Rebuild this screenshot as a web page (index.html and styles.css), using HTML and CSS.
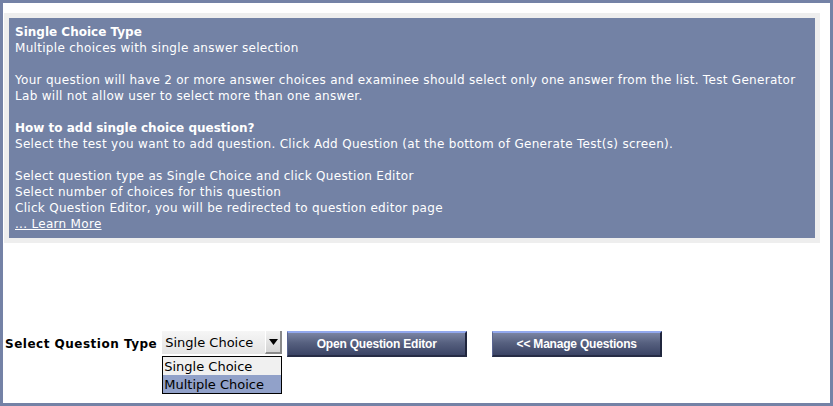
FILE: index.html
```html
<!DOCTYPE html>
<html>
<head>
<meta charset="utf-8">
<link rel="stylesheet" href="styles.css">
</head>
<body>
<div class="frame">
  <div class="help-box">
    <div class="help-panel">
      <p class="title">Single Choice Type</p>
      <p>Multiple choices with single answer selection</p>
      <p class="gap">Your question will have 2 or more answer choices and examinee should select only one answer from the list. Test Generator Lab will not allow user to select more than one answer.</p>
      <p class="gap title">How to add single choice question?</p>
      <p>Select the test you want to add question. Click Add Question (at the bottom of Generate Test(s) screen).</p>
      <p class="gap">Select question type as Single Choice and click Question Editor</p>
      <p>Select number of choices for this question</p>
      <p>Click Question Editor, you will be redirected to question editor page</p>
      <p><a class="more" href="#">... Learn More</a></p>
    </div>
  </div>
  <div class="controls">
    <span class="label">Select Question Type</span>
    <div class="select">
      <span class="select-value">Single Choice</span>
      <span class="select-arrow"><svg width="9" height="6" viewBox="0 0 9 6"><path d="M0 0H9L4.5 6Z" fill="#000"/></svg></span>
      <ul class="options">
        <li class="option">Single Choice</li>
        <li class="option active">Multiple Choice</li>
      </ul>
    </div>
    <button class="btn btn-editor">Open Question Editor</button>
    <button class="btn btn-manage">&lt;&lt; Manage Questions</button>
  </div>
</div>
</body>
</html>
```

FILE: styles.css
```css
html, body {
  margin: 0;
  padding: 0;
  background: #ffffff;
}

.frame {
  box-sizing: border-box;
  width: 833px;
  height: 406px;
  border: 3px solid #7482a6;
  background: #ffffff;
  padding: 10px 0 0 1px;
}

.help-box {
  width: 806px;
  padding: 5px;
  background: #eeeeee;
}

.help-panel {
  box-sizing: border-box;
  height: 220px;
  background: #7382a5;
  padding: 6px 6px;
  color: #ffffff;
  font-family: "DejaVu Sans", Verdana, sans-serif;
  font-size: 12px;
  line-height: 16px;
  letter-spacing: 0.3px;
}

.help-panel p {
  margin: 0;
}

.help-panel .gap {
  margin-top: 16px;
}

.help-panel .title {
  font-weight: bold;
  letter-spacing: 0;
}

.more {
  color: #ffffff;
  text-decoration: underline;
}

.controls {
  display: flex;
  align-items: center;
  margin-top: 88px;
  padding-left: 1px;
  height: 25px;
}

.label {
  font-family: "DejaVu Sans", Verdana, sans-serif;
  font-weight: bold;
  font-size: 12px;
  letter-spacing: 0.5px;
  color: #000000;
  margin-right: 5px;
}

.select {
  position: relative;
  box-sizing: border-box;
  width: 120px;
  height: 23px;
  margin-top: -2px;
  display: flex;
  align-items: center;
  background: linear-gradient(#f6f6f6, #e4e4e4);
  font-family: "DejaVu Sans", Verdana, sans-serif;
  font-size: 13px;
  color: #000000;
}

.select-value {
  flex: 1;
  padding-left: 3px;
}

.select-arrow {
  box-sizing: border-box;
  width: 17px;
  height: 23px;
  display: flex;
  align-items: center;
  justify-content: center;
  background: linear-gradient(#f2f2f2, #d4d4d4);
  border-right: 2px solid #8a8a8a;
  border-bottom: 2px solid #8a8a8a;
  border-left: 1px solid #ffffff;
}

.options {
  position: absolute;
  left: 0;
  top: 25px;
  box-sizing: border-box;
  width: 120px;
  margin: 0;
  padding: 0;
  list-style: none;
  border: 1px solid #000000;
  background: #f0f0f0;
}

.option {
  height: 18px;
  line-height: 19px;
  padding-left: 1px;
}

.option.active {
  background: #91a1c9;
}

.btn {
  box-sizing: border-box;
  height: 26px;
  padding: 0;
  border-top: 2px solid #92a8ee;
  border-left: 1px solid #5a6591;
  border-right: 2px solid #20263d;
  border-bottom: 2px solid #262c45;
  background: linear-gradient(#7a84a3, #56607f 45%, #3b4465);
  color: #ffffff;
  font-family: "Liberation Sans", Arial, sans-serif;
  font-weight: bold;
  font-size: 12px;
  letter-spacing: -0.2px;
}

.btn-editor {
  width: 180px;
  margin-left: 5px;
}

.btn-manage {
  width: 170px;
  margin-left: 25px;
}
```
